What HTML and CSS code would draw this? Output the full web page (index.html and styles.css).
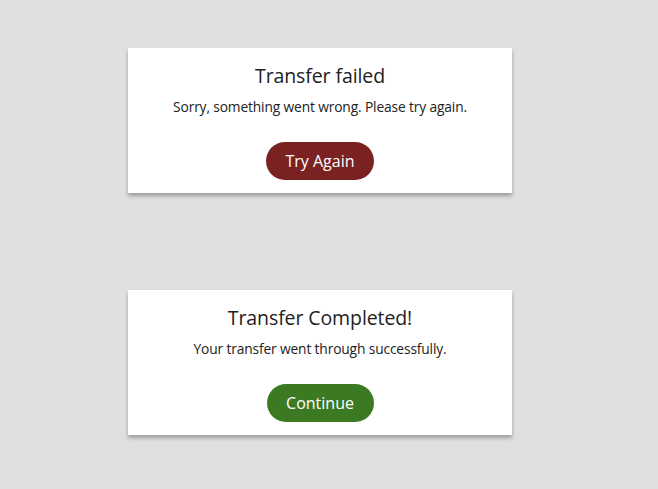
FILE: index.html
```html
<!DOCTYPE html>
<html>
<head>
<meta charset="utf-8">
<link rel="stylesheet" href="styles.css">
</head>
<body>
<main class="stack">
  <section class="card">
    <h2 class="title">Transfer failed</h2>
    <p class="msg">Sorry, something went wrong. Please try again.</p>
    <button class="btn btn-error">Try Again</button>
  </section>
  <section class="card">
    <h2 class="title">Transfer Completed!</h2>
    <p class="msg">Your transfer went through successfully.</p>
    <button class="btn btn-success">Continue</button>
  </section>
</main>
</body>
</html>
```
FILE: styles.css
```css
html, body {
  margin: 0;
  padding: 0;
  background: #e0e0e0;
  font-family: "Open Sans", "Noto Sans", sans-serif;
  color: #222;
}
.stack {
  display: flex;
  flex-direction: column;
  gap: 97px;
  padding: 48px 0 20px 128px;
}
.card {
  width: 384px;
  height: 145px;
  box-sizing: border-box;
  background: #fff;
  box-shadow: 0 3px 4px rgba(0, 0, 0, 0.3);
  display: flex;
  flex-direction: column;
  align-items: center;
  padding-top: 16px;
}
.title {
  margin: 0;
  font-size: 19.5px;
  font-weight: 400;
  line-height: 24px;
  letter-spacing: -0.1px;
}
.msg {
  margin: 9px 0 0;
  font-size: 13.8px;
  line-height: 20px;
  letter-spacing: -0.15px;
}
.btn {
  margin-top: 25px;
  height: 38px;
  padding: 0 19px;
  border: none;
  border-radius: 19px;
  color: #fff;
  font-family: inherit;
  font-size: 16px;
  min-width: 107px;
}
.btn-error { background: #7a2121; }
.btn-success { background: #3b7a23; }
```
